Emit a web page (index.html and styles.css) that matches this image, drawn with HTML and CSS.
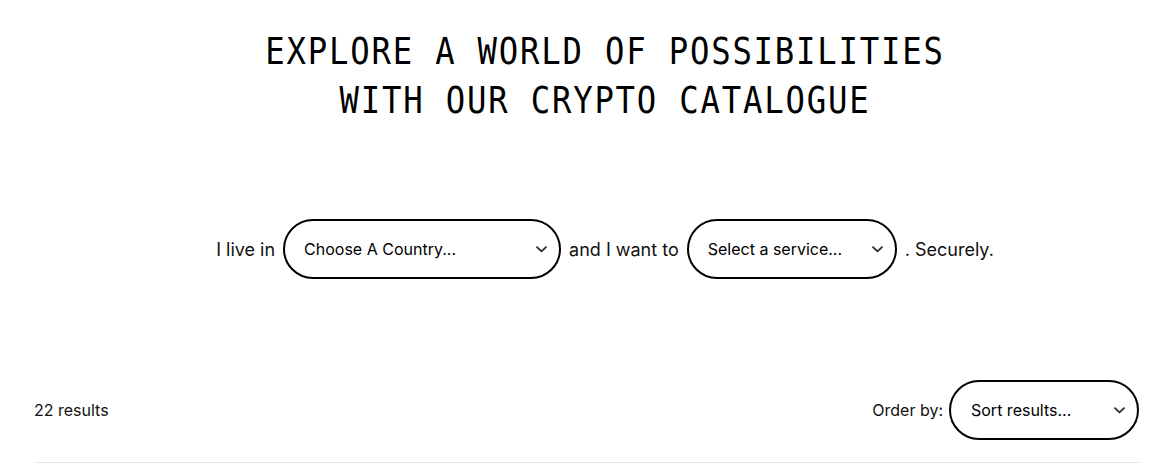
FILE: index.html
```html
<!DOCTYPE html>
<html lang="en">
<head>
<meta charset="utf-8">
<title>Crypto Catalogue</title>
<link rel="stylesheet" href="styles.css">
</head>
<body>
<main class="page">
  <section class="hero">
    <h1 class="title">EXPLORE A WORLD OF POSSIBILITIES<br>WITH OUR CRYPTO CATALOGUE</h1>

    <div class="sentence">
      <span class="phrase">I live in</span>
      <div class="select select-country">
        <span class="select-label">Choose A Country...</span>
        <svg class="chev" width="11" height="7" viewBox="0 0 11 7"><path d="M1 1.2 L5.5 5.4 L10 1.2" fill="none" stroke="#2a2a2a" stroke-width="1.8" stroke-linecap="round" stroke-linejoin="round"/></svg>
      </div>
      <span class="phrase">and I want to</span>
      <div class="select select-service">
        <span class="select-label">Select a service...</span>
        <svg class="chev" width="11" height="7" viewBox="0 0 11 7"><path d="M1 1.2 L5.5 5.4 L10 1.2" fill="none" stroke="#2a2a2a" stroke-width="1.8" stroke-linecap="round" stroke-linejoin="round"/></svg>
      </div>
      <span class="phrase">. Securely.</span>
    </div>
  </section>

  <div class="results-bar">
    <span class="count">22 results</span>
    <div class="order">
      <span class="order-label">Order by:</span>
      <div class="select select-sort">
        <span class="select-label">Sort results...</span>
        <svg class="chev" width="11" height="7" viewBox="0 0 11 7"><path d="M1 1.2 L5.5 5.4 L10 1.2" fill="none" stroke="#2a2a2a" stroke-width="1.8" stroke-linecap="round" stroke-linejoin="round"/></svg>
      </div>
    </div>
  </div>
  <div class="divider"></div>
</main>
</body>
</html>
```

FILE: styles.css
```css
* { box-sizing: border-box; }
html, body { margin: 0; padding: 0; background: #fff; }
body {
  font-family: Inter, "Noto Sans", sans-serif;
  color: #111;
}
.page {
  padding: 27px 16px 0 34px;
}
.hero {
  padding-left: 36px;
}
.title {
  margin: 0;
  text-align: center;
  font-family: "DejaVu Sans Mono", monospace;
  font-weight: normal;
  font-size: 38px;
  line-height: 49px;
  letter-spacing: 2.1px;
  color: #000;
  transform: scaleX(0.85);
  transform-origin: 50% 50%;
}
.sentence {
  margin-top: 94px;
  display: flex;
  align-items: center;
  justify-content: center;
  gap: 8px;
  font-size: 18px;
}
.phrase { white-space: nowrap; }
.select {
  display: flex;
  align-items: center;
  justify-content: space-between;
  height: 60px;
  border: 2px solid #000;
  border-radius: 30px;
  padding: 0 12px 0 19px;
  background: #fff;
}
.select-label {
  font-size: 16px;
  color: #000;
  white-space: nowrap;
}
.select-country { width: 278px; }
.select-service { width: 210px; }
.select-sort { width: 190px; padding-left: 20px; }
.chev { display: block; }
.results-bar {
  margin-top: 101px;
  padding-right: 1px;
  display: flex;
  align-items: center;
  justify-content: space-between;
}
.count { font-size: 16px; }
.order {
  display: flex;
  align-items: center;
  gap: 6px;
}
.order-label { font-size: 16px; }
.divider {
  margin-top: 22px;
  height: 1px;
  background: #e9e9e9;
}
```
